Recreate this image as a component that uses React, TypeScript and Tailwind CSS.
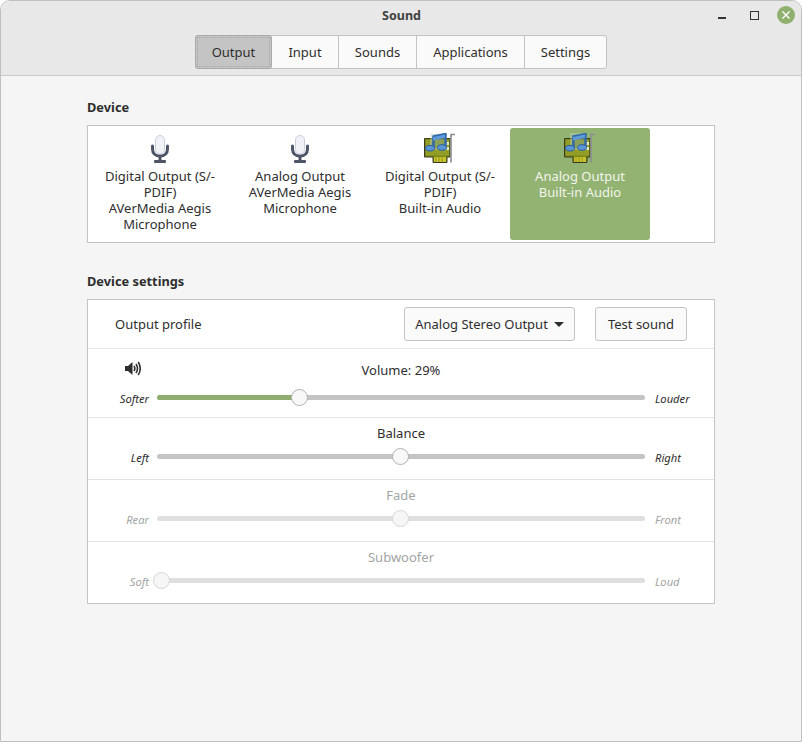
import React from 'react';

const tabs = ['Output', 'Input', 'Sounds', 'Applications', 'Settings'];
const tabWidths = ['w-[77px]', 'w-[67px]', 'w-[78px]', 'w-[108px]', 'w-[81px]'];

const MicIcon = () => (
  <svg width="22" height="28" viewBox="0 0 22 28" className="block mt-[2px]">
    <path d="M3.500 11v3c0 4.500 3 7 7.500 7s7.500-2.500 7.500-7v-3" fill="none" stroke="#4d5566" strokeWidth="3" strokeLinecap="round" />
    <rect x="9.500" y="20" width="3" height="6" fill="#4d5566" />
    <rect x="5" y="25" width="12" height="3" rx="1" fill="#4d5566" />
    <rect x="6.500" y="0.500" width="9" height="18.500" rx="4.500" fill="#f0f2f7" stroke="#c9cedb" />
  </svg>
);

const CardIcon = () => (
  <svg width="32" height="30" viewBox="0 0 32 30" className="block">
    <path d="M0.500 5.500h25.500v18.500h-3v5.500h-14v-5.500h-8.500z" fill="#7c8818" stroke="#3a3a20" />
    <path d="M2 7h23v15.500H2z" fill="#929e28" />
    <path d="M10 24h12v5H10z" fill="#c8c42c" />
    <path d="M12 24v5M15 24v5M18 24v5" stroke="#98941a" strokeWidth="1" />
    <rect x="22.500" y="9" width="2.500" height="3" fill="#e0e4c8" />
    <rect x="22.500" y="14" width="2.500" height="3" fill="#e0e4c8" />
    <path d="M31 1.500h-4v28" fill="none" stroke="#8a8d90" strokeWidth="1.600" />
    <rect x="7" y="1" width="15" height="15" fill="#7fa6d0" fillOpacity="0.300" stroke="#d8e2d0" strokeWidth="0.600" />
    <path d="M9.500 15V3.500l12-2.500v13" fill="none" stroke="#2f67a8" strokeWidth="2.400" />
    <path d="M9 4l12-2.500v3.500L9 7.500z" fill="#5f9ad8" />
    <ellipse cx="6" cy="15.200" rx="4.500" ry="2.800" fill="#5a96d4" stroke="#2a5e9c" />
    <ellipse cx="18" cy="14.500" rx="4.500" ry="2.800" fill="#5a96d4" stroke="#2a5e9c" />
  </svg>
);

const SpeakerIcon = () => (
  <svg width="16" height="15" viewBox="0 0 16 15" className="block">
    <path d="M0 5h3l4.500-4v13l-4.500-4h-3z" fill="#2e2e2e" />
    <path d="M9 5c1 1.500 1 3.500 0 5M11 3c1.800 2.700 1.800 6.300 0 9M13.200 1c2.700 3.800 2.700 9.200 0 13" fill="none" stroke="#2e2e2e" strokeWidth="1.600" />
  </svg>
);

const devices = [
  { lines: ['Digital Output (S/-', 'PDIF)', 'AVerMedia Aegis', 'Microphone'], icon: 'mic' },
  { lines: ['Analog Output', 'AVerMedia Aegis', 'Microphone'], icon: 'mic' },
  { lines: ['Digital Output (S/-', 'PDIF)', 'Built-in Audio'], icon: 'card' },
  { lines: ['Analog Output', 'Built-in Audio'], icon: 'card', selected: true },
];

type SliderProps = {
  left: string;
  right: string;
  value: number;
  thumb: number;
  disabled?: boolean;
  fill?: boolean;
};

const Slider = ({ left, right, value, thumb, disabled, fill }: SliderProps) => (
  <div className={`flex items-center h-5 ${disabled ? 'text-[#a3a5a5]' : 'text-[#2e2e2e]'}`}>
    <span className="w-[62px] pr-2 text-right text-[11.200px] italic mt-[5px]">{left}</span>
    <div className={`relative w-[488px] h-[5px] rounded-full ${disabled ? 'bg-[#dfdfdf]' : 'bg-[#c4c4c4]'}`}>
      {fill && <div className="h-full rounded-full bg-[#8fad6e]" style={{ width: `${value}px` }} />}
      <div
        className={`absolute top-[-6px] w-[17px] h-[17px] rounded-full border ${disabled ? 'bg-[#f6f6f6] border-[#d6d6d6]' : 'bg-[#f8f8f8] border-[#b0b0b0]'}`}
        style={{ left: `${thumb}px` }}
      />
    </div>
    <span className="pl-[10px] text-[11.200px] italic mt-[5px]">{right}</span>
  </div>
);

export default function App() {
  return (
    <div
      className="w-[802px] h-[742px] flex flex-col overflow-hidden rounded-t-[10px] border border-[#c0c0c0] bg-[#f5f5f5] text-[13px] text-[#2e2e2e]"
      style={{ fontFamily: '"Noto Sans", sans-serif' }}
    >
      {/* titlebar + tabs */}
      <div className="h-[75px] shrink-0 flex flex-col bg-[#e8e8e8] border-b border-[#c8c8c8]">
        <div className="relative h-[34px] flex items-center justify-center">
          <span className="font-bold text-[12.500px] text-[#404040] mt-[-4px] ml-[1px]">Sound</span>
          <div className="absolute right-[6px] top-[5px] flex items-start">
            <div className="w-[8px] h-[1.500px] bg-[#333] mt-[11px] mr-[24px]" />
            <div className="w-[9px] h-[9px] border border-[#333] mt-[5px] mr-[18px]" />
            <div className="w-[18px] h-[18px] rounded-full bg-[#8fb06e] flex items-center justify-center">
              <svg width="10" height="10" viewBox="0 0 10 10">
                <path d="M1.500 1.500l7 7M8.500 1.500l-7 7" stroke="#fff" strokeWidth="1.400" />
              </svg>
            </div>
          </div>
        </div>
        <div className="flex justify-center">
          <div className="flex w-[412px] h-[34px] rounded-[3px] border border-[#c4c4c4] bg-[#fafafa]">
            {tabs.map((t, i) => (
              <div
                key={t}
                className={`${tabWidths[i]} shrink-0 flex items-center justify-center pt-[1px] ${i > 0 && i < 4 ? 'border-r border-[#c4c4c4]' : ''} ${i === 0 ? 'bg-[#c4c4c4] border border-[#aaa] rounded-[3px] -ml-px -my-px h-[34px] relative' : ''}`}
              >
                {i === 0 && <div className="absolute inset-[1px] border border-dotted border-[#a4a4a4]" />}
                {t}
              </div>
            ))}
          </div>
        </div>
      </div>

      {/* content */}
      <div className="pl-[86px] pt-[21px]">
        <div className="font-bold text-[12.800px] leading-[20px] mb-[8px]">Device</div>
        <div className="w-[628px] h-[118px] border border-[#c4c4c4] bg-white flex p-[2px]">
          {devices.map((d, i) => (
            <div
              key={i}
              className={`w-[140px] h-[112px] flex flex-col items-center pt-[5px] rounded-[3px] ${d.selected ? 'bg-[#93b372] text-[#f2f5ec]' : ''}`}
            >
              <div className="h-[35px] shrink-0 flex items-start justify-center">
                {d.icon === 'mic' ? <MicIcon /> : <CardIcon />}
              </div>
              <div className="text-center leading-[16px]">
                {d.lines.map((l) => (
                  <div key={l}>{l}</div>
                ))}
              </div>
            </div>
          ))}
        </div>

        <div className="font-bold text-[12.800px] leading-[20px] mt-[28px] mb-[8px]">Device settings</div>
        <div className="w-[628px] h-[305px] border border-[#c4c4c4] bg-white flex flex-col">
          <div className="h-[49px] shrink-0 flex items-center pl-[27px] pr-[27px] border-b border-[#e4e4e4]">
            <span className="flex-1 pt-[1px]">Output profile</span>
            <div className="h-[34px] w-[171px] flex items-center justify-center gap-[6px] pt-[1px] rounded-[3px] border border-[#c4c4c4] bg-[#fafafa] mr-[20px]">
              Analog Stereo Output
              <svg width="10" height="5" viewBox="0 0 10 5">
                <path d="M0 0h10L5 5z" fill="#2e2e2e" />
              </svg>
            </div>
            <div className="h-[34px] w-[92px] flex items-center justify-center pt-[1px] rounded-[3px] border border-[#c4c4c4] bg-[#fafafa]">
              Test sound
            </div>
          </div>

          <div className="h-[69px] shrink-0 flex flex-col pl-[7px] border-b border-[#e4e4e4]">
            <div className="relative h-[38px] flex items-center justify-center pr-[7px] pt-[5px]">
              <div className="absolute left-[30px] top-[12px]">
                <SpeakerIcon />
              </div>
              Volume: 29%
            </div>
            <Slider left="Softer" right="Louder" value={142} thumb={134} fill />
          </div>

          <div className="h-[62px] shrink-0 flex flex-col pl-[7px] border-b border-[#e4e4e4]">
            <div className="h-[25px] flex items-end justify-center pr-[7px]">Balance</div>
            <div className="mt-[3px]"><Slider left="Left" right="Right" value={0} thumb={235} /></div>
          </div>

          <div className="h-[62px] shrink-0 flex flex-col pl-[7px] border-b border-[#e4e4e4] text-[#a3a5a5]">
            <div className="h-[25px] flex items-end justify-center pr-[7px]">Fade</div>
            <div className="mt-[3px]"><Slider left="Rear" right="Front" value={0} thumb={235} disabled /></div>
          </div>

          <div className="flex-1 flex flex-col pl-[7px] text-[#a3a5a5]">
            <div className="h-[25px] flex items-end justify-center pr-[7px]">Subwoofer</div>
            <div className="mt-[3px]"><Slider left="Soft" right="Loud" value={0} thumb={-4} disabled /></div>
          </div>
        </div>
      </div>
    </div>
  );
}
